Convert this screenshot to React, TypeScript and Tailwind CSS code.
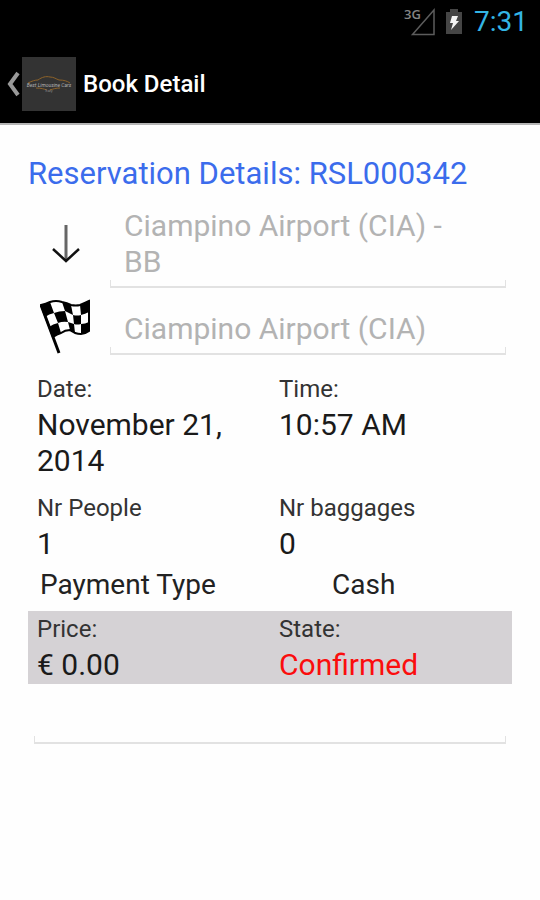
import type { ReactNode } from "react";

const DETAILS = [
  { label: "Date:", value: "November 21, 2014" },
  { label: "Time:", value: "10:57 AM" },
  { label: "Nr People", value: "1" },
  { label: "Nr baggages", value: "0" },
];

function StatusBar() {
  return (
    <div className="flex h-11 items-center justify-end pr-3 text-[#33b5e5]">
      <svg width="34" height="32" viewBox="0 0 34 32" className="mr-2 shrink-0">
        <text
          x="1"
          y="13"
          fontSize="13"
          fontWeight="600"
          fontFamily="Open Sans, sans-serif"
          fill="#858585"
        >
          3G
        </text>
        <path d="M9.500 28.500H31V4Z" fill="none" stroke="#5c5c5c" strokeWidth="1.500" />
      </svg>
      <svg width="18" height="28" viewBox="0 0 18 28" className="mr-[11px] shrink-0">
        <path d="M5 1h8v3h4v22H1V4h4z" fill="#454545" />
        <path d="M7 8h6l-2 5h3l-8 9 2-7H5z" fill="#f5f5f5" />
      </svg>
      <span className="text-[28px] leading-9">7:31</span>
    </div>
  );
}

function Logo() {
  return (
    <svg width="54" height="54" viewBox="0 0 54 54" className="shrink-0 bg-[#333333]">
      <path
        d="M6 26c4-2 7-3 10-3 4-3 8-4 12-3 4 0 6 2 9 3 5 0 8 1 11 3M14 31c5 0 8 1 11 2M38 31c-4 0-7 1-10 2"
        fill="none"
        stroke="#8d6229"
        strokeWidth="1"
      />
      <text x="27" y="30" fontSize="5" fontStyle="italic" textAnchor="middle" fill="#b0b0b0">
        Best Limousine Cars
      </text>
      <text x="27" y="35" fontSize="4" textAnchor="middle" fill="#888888">
        Italy
      </text>
    </svg>
  );
}

function FlagIcon() {
  return (
    <svg width="52" height="56" viewBox="0 0 52 56">
      <path
        d="M1 6Q6 5 10 3Q16 1 22 3Q27 4 31 6Q36 7 40 6Q45 4 49 2V32Q45 35 41 35Q38 35 35 34Q32 32 30 31Q25 31 21 34Q17 35 13 38Z"
        fill="#fff"
        stroke="#000"
        strokeWidth="2"
      />
      <path d="M1 6l18 48" stroke="#000" strokeWidth="3" />
      <path d="M1 6Q6 5 10 3L14 14Q9 15 5 18Z" />
      <path d="M22 3Q27 4 31 6L33 16Q29 14 25 12Z" />
      <path d="M40 6Q45 4 49 2V13Q45 15 41 16Z" />
      <path d="M14 14Q19 12 25 12L28 23Q23 22 18 24Z" />
      <path d="M33 16Q37 17 41 16V25Q37 26 34 25Z" />
      <path d="M9 28Q13 25 18 24L21 34Q17 35 13 38Z" />
      <path d="M28 23Q31 24 34 25L35 34Q32 32 30 31Z" />
      <path d="M41 25Q45 25 49 23V32Q45 35 41 35Z" />
    </svg>
  );
}

function ArrowIcon() {
  return (
    <svg width="28" height="40" viewBox="0 0 28 40" fill="none" className="mb-6">
      <path d="M14 1v36" stroke="#666" strokeWidth="3" />
      <path d="M1 25l13 12 13-12" stroke="#111" strokeWidth="2.500" />
    </svg>
  );
}

function Underline() {
  return <div className="h-2 border-x border-b-2 border-[#e2e2e2]" />;
}

function Place({ icon, children }: { icon: ReactNode; children: ReactNode }) {
  return (
    <div className="flex items-end">
      <div className="flex w-[76px] shrink-0 justify-center">{icon}</div>
      <div className="mx-[6px] min-w-0 flex-1">
        {children}
        <Underline />
      </div>
    </div>
  );
}

function Detail({ label, value, red }: { label: string; value: string; red?: boolean }) {
  return (
    <div className="px-[9px]">
      <dt className="text-2xl leading-9 text-[#333333]">{label}</dt>
      <dd className={`text-3xl leading-9 ${red ? "text-[#fb0d0d]" : "text-[#1a1a1a]"}`}>
        {value}
      </dd>
    </div>
  );
}

export default function App() {
  return (
    <div className="min-h-screen bg-[#fefefe] font-[Roboto,sans-serif]">
      <header className="border-b-2 border-[#b5b5b5] bg-black">
        <StatusBar />
        <div className="flex h-[79px] items-center pl-[6px]">
          <button aria-label="Back" className="flex items-center">
            <svg width="16" height="28" viewBox="0 0 16 28" fill="none">
              <path d="M12 3L4 14l8 11" stroke="#999999" strokeWidth="4" />
            </svg>
            <Logo />
          </button>
          <h1 className="ml-[7px] text-2xl leading-9 font-medium text-white">Book Detail</h1>
        </div>
      </header>

      <main className="px-7 pt-[31px]">
        <h2 className="text-[31px] leading-9 text-[#3b6cec]">Reservation Details: RSL000342</h2>

        <div className="mt-4 flex flex-col gap-[11px]">
          <Place icon={<ArrowIcon />}>
            <textarea
              aria-label="Pick-up"
              rows={2}
              readOnly
              className="block w-full resize-none overflow-hidden pr-8 pl-[14px] text-3xl leading-9 text-[#b3b3b3] outline-none"
              defaultValue="Ciampino Airport (CIA) - BB"
            />
          </Place>
          <Place icon={<FlagIcon />}>
            <input
              aria-label="Drop-off"
              readOnly
              className="block w-full pr-8 pl-[14px] text-3xl leading-9 text-[#b3b3b3] outline-none"
              defaultValue="Ciampino Airport (CIA)"
            />
          </Place>
        </div>

        <dl className="mt-4 grid grid-cols-2 gap-y-[11px]">
          {DETAILS.map((d) => (
            <Detail key={d.label} label={d.label} value={d.value} />
          ))}
        </dl>

        <dl className="grid grid-cols-2 text-[28px] leading-[45px] text-[#222222]">
          <dt className="pl-3">Payment Type</dt>
          <dd className="pl-[62px]">Cash</dd>
        </dl>

        <dl className="mt-1 grid grid-cols-2 bg-[#d5d2d5] pb-px">
          <Detail label="Price:" value="€ 0.00" />
          <Detail label="State:" value="Confirmed" red />
        </dl>

        <div className="mx-[6px] mt-4">
          <input aria-label="Notes" className="block w-full text-3xl leading-9 outline-none" />
          <Underline />
        </div>
      </main>
    </div>
  );
}
